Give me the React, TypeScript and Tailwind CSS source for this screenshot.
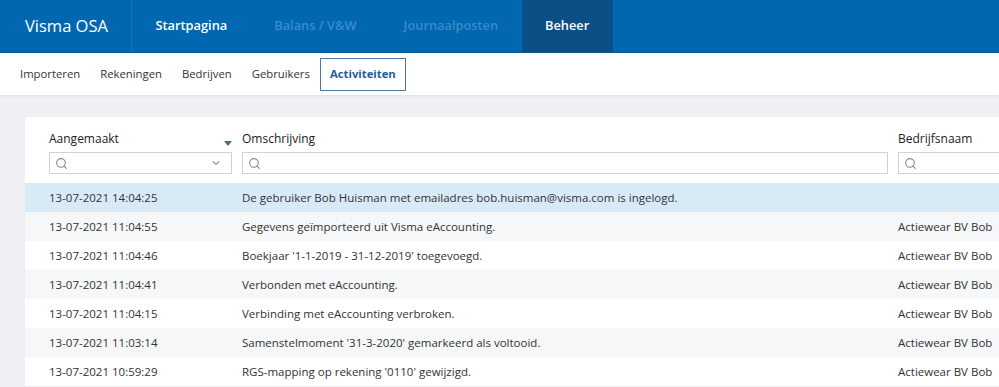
import { Search, ChevronDown } from 'lucide-react';

const rijen = [
  { datum: '13-07-2021 14:04:25', omschrijving: 'De gebruiker Bob Huisman met emailadres bob.huisman@visma.com is ingelogd.', bedrijf: '' },
  { datum: '13-07-2021 11:04:55', omschrijving: 'Gegevens geïmporteerd uit Visma eAccounting.', bedrijf: 'Actiewear BV Bob' },
  { datum: '13-07-2021 11:04:46', omschrijving: "Boekjaar '1-1-2019 - 31-12-2019' toegevoegd.", bedrijf: 'Actiewear BV Bob' },
  { datum: '13-07-2021 11:04:41', omschrijving: 'Verbonden met eAccounting.', bedrijf: 'Actiewear BV Bob' },
  { datum: '13-07-2021 11:04:15', omschrijving: 'Verbinding met eAccounting verbroken.', bedrijf: 'Actiewear BV Bob' },
  { datum: '13-07-2021 11:03:14', omschrijving: "Samenstelmoment '31-3-2020' gemarkeerd als voltooid.", bedrijf: 'Actiewear BV Bob' },
  { datum: '13-07-2021 10:59:29', omschrijving: "RGS-mapping op rekening '0110' gewijzigd.", bedrijf: 'Actiewear BV Bob' },
];

const hoofdmenu = [
  { label: 'Startpagina', actief: false, uit: false },
  { label: 'Balans / V&W', actief: false, uit: true },
  { label: 'Journaalposten', actief: false, uit: true },
  { label: 'Beheer', actief: true, uit: false },
];

const submenu = ['Importeren', 'Rekeningen', 'Bedrijven', 'Gebruikers'];

export default function App() {
  return (
    <div className="h-[387px] w-[999px] overflow-hidden bg-[#eef0f3] font-['Open_Sans',sans-serif] text-[#333]">
      {/* Bovenbalk */}
      <div className="flex h-[53px] border-b border-[#0b5a94] bg-[#0067b0]">
        <div className="flex w-[132px] items-center border-r border-[#1a75b8] pl-[25px] text-[16.5px] text-white">
          Visma OSA
        </div>
        <div className="flex">
          {hoofdmenu.map((item) => (
            <div
              key={item.label}
              className={`flex items-center px-[23.5px] text-[12.8px] font-semibold ${
                item.actief ? 'bg-[#0b4f86] text-white' : item.uit ? 'text-[#3a8bcd]' : 'text-white'
              }`}
            >
              {item.label}
            </div>
          ))}
        </div>
      </div>

      {/* Submenu */}
      <div className="flex h-[42px] items-center bg-white pl-[10px] shadow-[0_1px_2px_rgba(0,0,0,0.08)]">
        {submenu.map((s) => (
          <div key={s} className="px-[10px] text-[11.3px] text-[#333]">
            {s}
          </div>
        ))}
        <div className="flex h-[33px] w-[86px] items-center justify-center border border-[#4a7aa3] text-[11.3px] font-bold text-[#1f5f97]">
          Activiteiten
        </div>
      </div>

      {/* Tabel */}
      <div className="ml-[25px] mt-[22px] bg-white pt-[12px]">
        <div className="flex pl-[24px] text-[12px] text-[#222]">
          <div className="relative w-[193px] pt-[1px]">
            Aangemaakt
            <span className="absolute right-[10px] top-[12px] h-0 w-0 border-x-[4px] border-t-[5px] border-x-transparent border-t-[#4b6a88]" />
          </div>
          <div className="w-[656px] pt-[1px]">Omschrijving</div>
          <div className="pt-[1px]">Bedrijfsnaam</div>
        </div>
        <div className="mt-[4px] flex pl-[24px]">
          <div className="mr-[10px] flex h-[22px] w-[183px] items-center border border-[#cfd3d6] px-[5px]">
            <Search size={13} strokeWidth={2} className="text-[#888]" />
            <ChevronDown size={12} strokeWidth={2} className="ml-auto mr-[4px] text-[#555]" />
          </div>
          <div className="mr-[10px] flex h-[22px] w-[646px] items-center border border-[#cfd3d6] px-[5px]">
            <Search size={13} strokeWidth={2} className="text-[#888]" />
          </div>
          <div className="flex h-[22px] flex-1 items-center border border-r-0 border-[#cfd3d6] px-[5px]">
            <Search size={13} strokeWidth={2} className="text-[#888]" />
          </div>
        </div>
        <div className="mt-[9px]">
          {rijen.map((r, i) => (
            <div
              key={r.datum}
              className={`flex h-[29px] items-center pl-[24px] text-[11.5px] text-[#333] ${
                i === 0 ? 'bg-[#d9eaf7]' : i % 2 === 1 ? 'bg-[#f6f7f8]' : 'bg-white'
              }`}
            >
              <div className="w-[193px]">{r.datum}</div>
              <div className="w-[656px] whitespace-nowrap">{r.omschrijving}</div>
              <div className="whitespace-nowrap">{r.bedrijf}</div>
            </div>
          ))}
        </div>
      </div>
    </div>
  );
}
